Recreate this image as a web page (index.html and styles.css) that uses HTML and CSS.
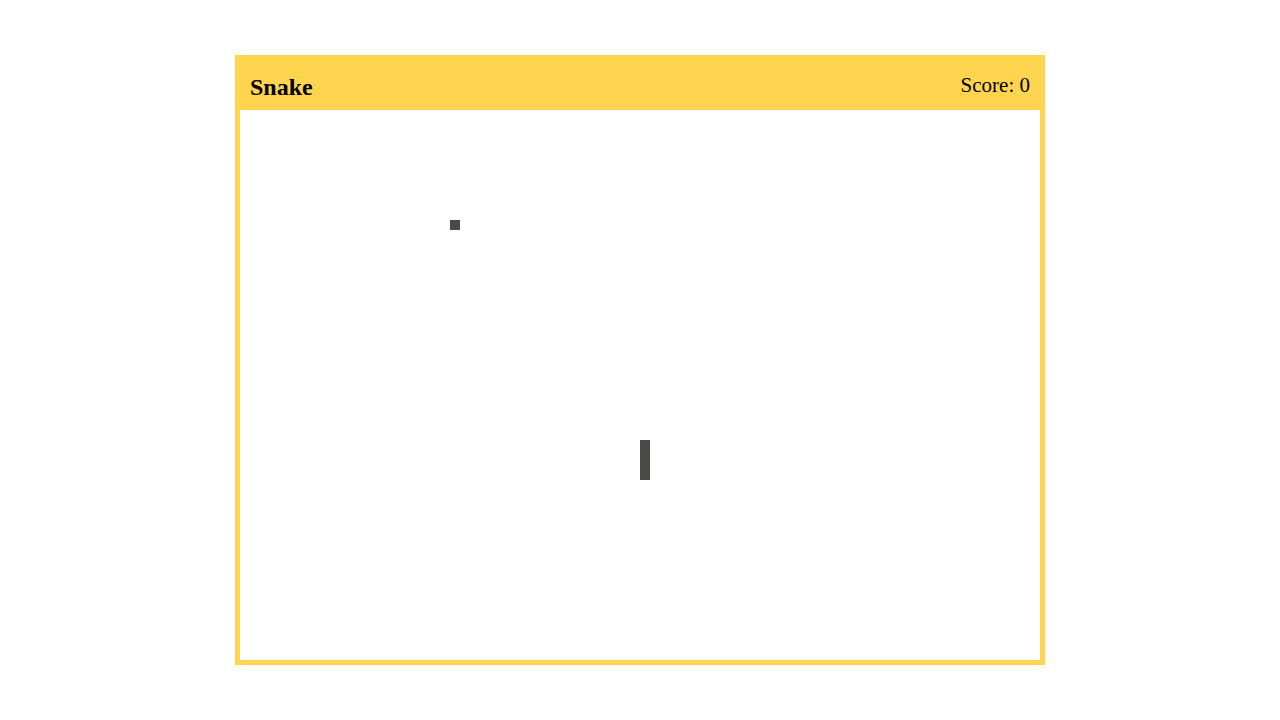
FILE: index.html
```html
<!DOCTYPE html>
<html>
<head>
<meta charset="utf-8">
<title>Snake</title>
<link rel="stylesheet" href="styles.css">
</head>
<body>
<div class="game">
  <div class="header">
    <h1 class="title">Snake</h1>
    <div class="score">Score: 0</div>
  </div>
  <div class="board">
    <div class="cell food" style="left:210px;top:110px;"></div>
    <div class="cell" style="left:400px;top:330px;"></div>
    <div class="cell" style="left:400px;top:340px;"></div>
    <div class="cell" style="left:400px;top:350px;"></div>
    <div class="cell" style="left:400px;top:360px;"></div>
  </div>
</div>
</body>
</html>
```
FILE: styles.css
```css
html, body {
  margin: 0;
  padding: 0;
  background: #ffffff;
}
body {
  font-family: "Liberation Serif", "Times New Roman", serif;
  padding-top: 55px;
}
.game {
  width: 800px;
  margin: 0 auto;
  border: 5px solid #ffd54f;
  background: #ffd54f;
}
.header {
  height: 50px;
  box-sizing: border-box;
  padding: 15px 10px 0 10px;
  display: flex;
  justify-content: space-between;
  align-items: flex-start;
  color: #000;
}
.title {
  margin: 0;
  font-size: 24px;
  line-height: 24px;
  font-weight: bold;
}
.score {
  font-size: 21px;
  line-height: 20px;
}
.board {
  position: relative;
  width: 800px;
  height: 550px;
  background: #ffffff;
}
.cell {
  position: absolute;
  width: 10px;
  height: 10px;
  background: #4a4a48;
}
```
